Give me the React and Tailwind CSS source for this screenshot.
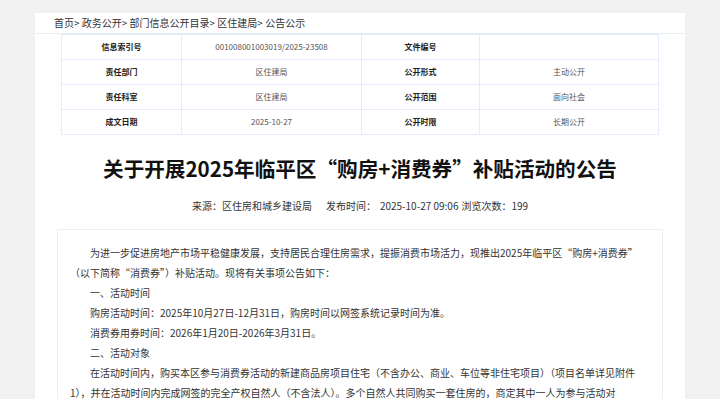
export default function App() {
  const rows = [
    ["信息索引号", "001008001003019/2025-23508", "文件编号", ""],
    ["责任部门", "区住建局", "公开形式", "主动公开"],
    ["责任科室", "区住建局", "公开范围", "面向社会"],
    ["成文日期", "2025-10-27", "公开时限", "长期公开"],
  ];
  return (
    <div className="min-h-[399px] bg-[#f1f1f1] pt-[13px] [font-family:'Noto_Sans_CJK_SC',sans-serif]">
      <div className="mx-auto w-[650px] bg-white pb-10">
        <div className="h-[20px] pl-[19px] text-[10px] leading-[20px] text-[#333]">
          首页&gt; 政务公开&gt; 部门信息公开目录&gt; 区住建局&gt; 公告公示
        </div>
        <div className="h-px bg-[#e6ecf3]" />
        <div className="ml-[26px] grid w-[598px] grid-cols-[119px_179px_117px_178px] gap-px bg-[#e3ecf8] p-px">
          {rows.map((r, i) =>
            r.map((c, j) => (
              <div
                key={i + "-" + j}
                className={
                  "flex h-[24px] items-center justify-center bg-white text-[8px] " +
                  (j % 2 === 0 ? "font-bold text-[#222]" : "text-[#555]")
                }
              >
                {c}
              </div>
            ))
          )}
        </div>
        <h1 className="mt-[19px] text-center text-[20.6px] font-bold leading-[28px] text-[#111]">
          关于开展2025年临平区“购房+消费券”补贴活动的公告
        </h1>
        <div className="mt-[16px] text-center text-[10px] leading-[16px] text-[#333]">
          <span>来源：区住房和城乡建设局</span>
          <span className="ml-[14px]">发布时间：</span>
          <span className="ml-[4px]">2025-10-27 09:06</span>
          <span className="ml-[3px]">浏览次数：199</span>
        </div>
        <div className="mx-[22px] mt-[15px] border border-[#eeeeee] px-[12px] pt-[13px] pb-4 text-[10px] leading-[20px] text-[#333]">
          <p className="whitespace-nowrap indent-[20px]">
            为进一步促进房地产市场平稳健康发展，支持居民合理住房需求，提振消费市场活力，现推出2025年临平区“购房+消费券”
            <br />
            （以下简称“消费券”）补贴活动。现将有关事项公告如下：
          </p>
          <p className="indent-[20px]">一、活动时间</p>
          <p className="indent-[20px]">购房活动时间：2025年10月27日-12月31日，购房时间以网签系统记录时间为准。</p>
          <p className="indent-[20px]">消费券用券时间：2026年1月20日-2026年3月31日。</p>
          <p className="indent-[20px]">二、活动对象</p>
          <p className="whitespace-nowrap indent-[20px]">
            在活动时间内，购买本区参与消费券活动的新建商品房项目住宅（不含办公、商业、车位等非住宅项目）（项目名单详见附件
            <br />
            1），并在活动时间内完成网签的完全产权自然人（不含法人）。多个自然人共同购买一套住房的，商定其中一人为参与活动对
            <br />
            象。
          </p>
        </div>
      </div>
    </div>
  );
}
